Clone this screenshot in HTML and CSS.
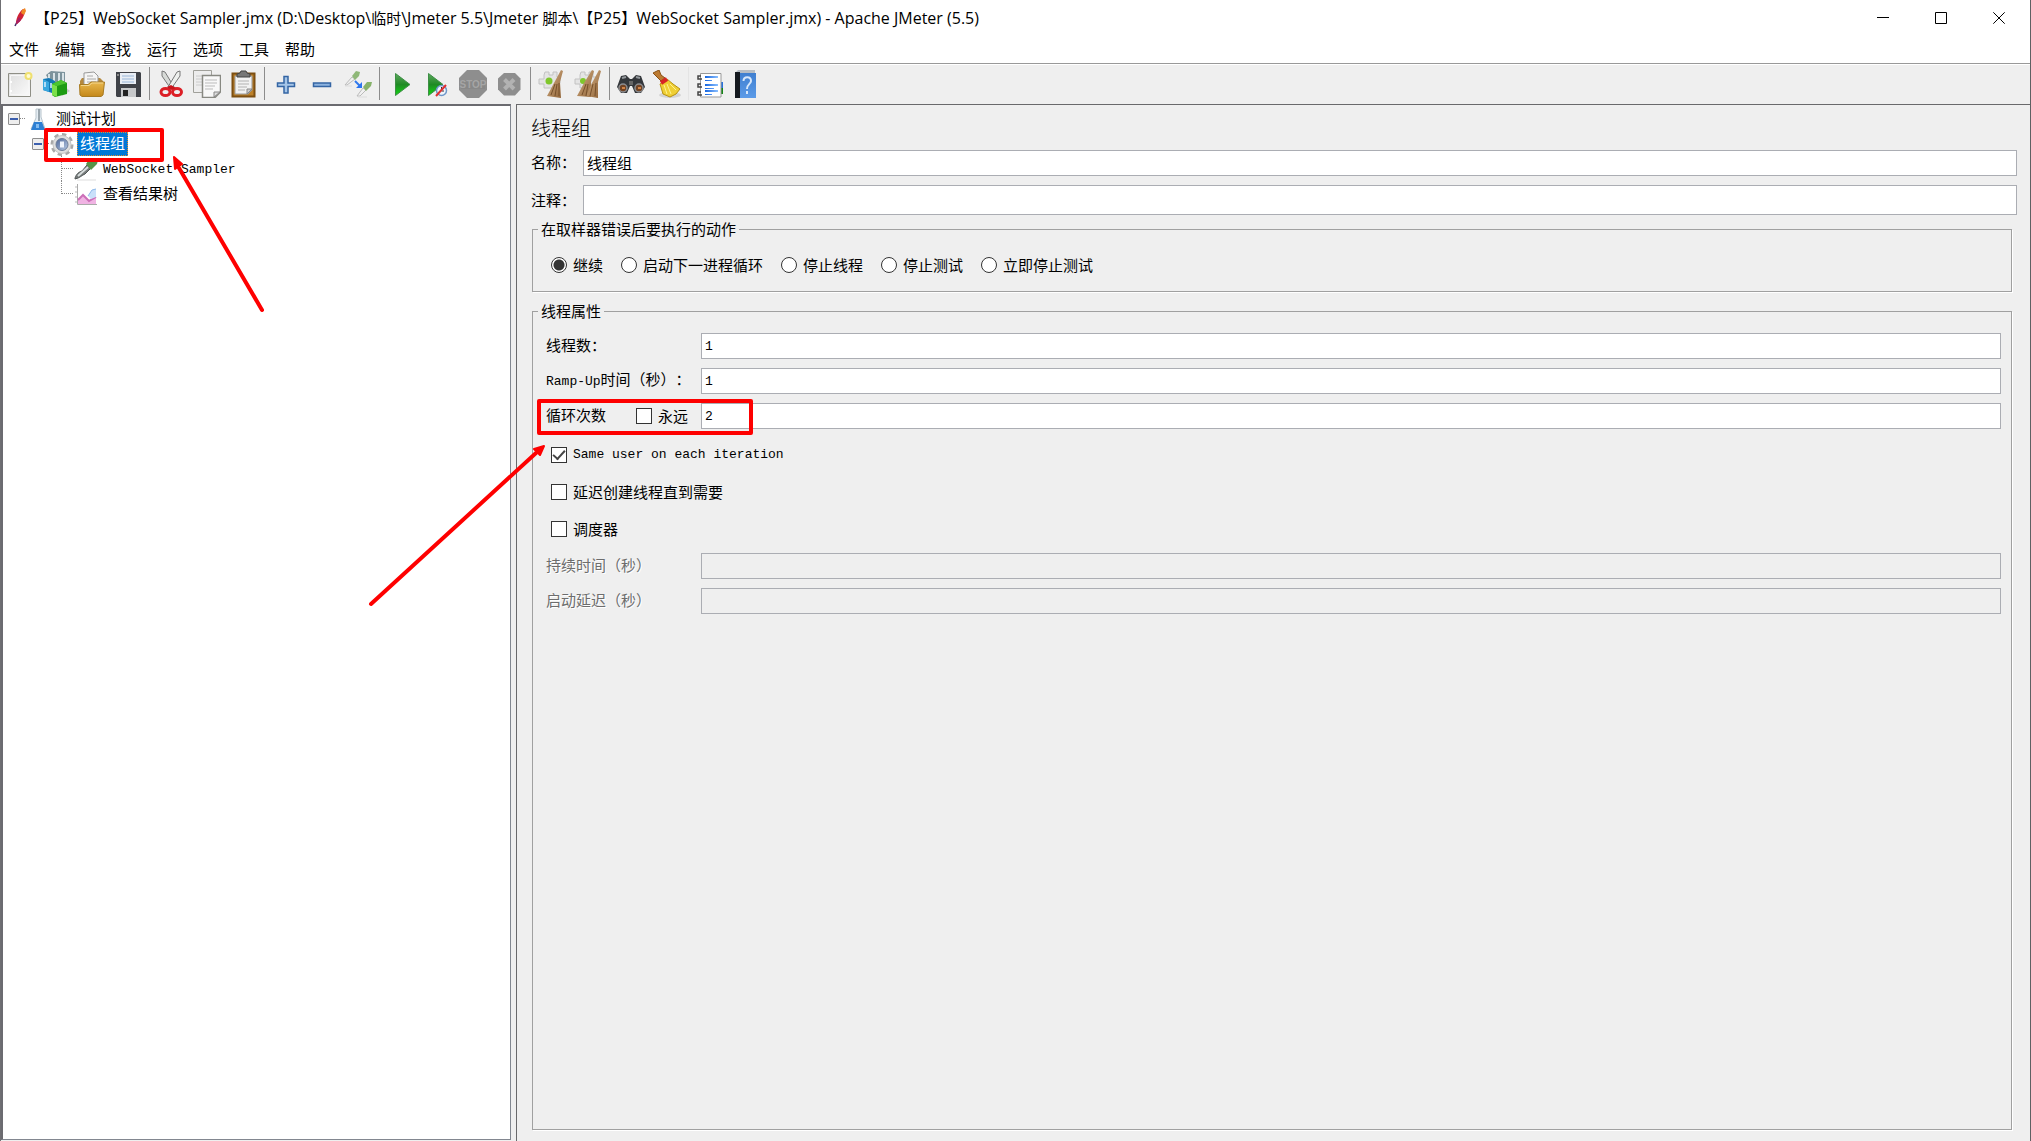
FILE: index.html
```html
<!DOCTYPE html>
<html lang="zh-CN">
<head>
<meta charset="utf-8">
<title>WebSocket Sampler.jmx - Apache JMeter (5.5)</title>
<link rel="stylesheet" href="styles.css">
</head>
<body>
<svg class="defs" aria-hidden="true">
  <defs>
    <linearGradient id="green" x1="0" y1="0" x2="0" y2="1"><stop offset="0" stop-color="#5fa860"/><stop offset=".5" stop-color="#1f8a24"/><stop offset="1" stop-color="#13d813"/></linearGradient>
    <linearGradient id="gold" x1="0" y1="0" x2="0" y2="1"><stop offset="0" stop-color="#e9b84e"/><stop offset="1" stop-color="#c4881a"/></linearGradient>
    <linearGradient id="paper" x1="0" y1="0" x2="1" y2="1"><stop offset="0" stop-color="#dedede"/><stop offset="1" stop-color="#fbfbfb"/></linearGradient>
    <linearGradient id="blue" x1="0" y1="0" x2="0" y2="1"><stop offset="0" stop-color="#3f7fd0"/><stop offset="1" stop-color="#5c9be8"/></linearGradient>
    <linearGradient id="line" x1="0" y1="0" x2="1" y2="0"><stop offset="0" stop-color="#1565e0"/><stop offset="1" stop-color="#8cc0ff"/></linearGradient>
    <linearGradient id="broom" x1="0" y1="0" x2="1" y2="1"><stop offset="0" stop-color="#d8b48a"/><stop offset="1" stop-color="#8d6034"/></linearGradient>
    <linearGradient id="steel" x1="0" y1="0" x2="1" y2="1"><stop offset="0" stop-color="#4d6595"/><stop offset="1" stop-color="#b9cbe6"/></linearGradient>
  </defs>
</svg>
<div class="window">
  <header class="titlebar">
    <svg class="feather" viewBox="0 0 14 22"><path d="M2 19 4 15" stroke="#4a2a6a" stroke-width="1.5"/><path d="M3 16C3 11 6 5 10 2l2 1C12 9 8 14 4 17Z" fill="#cf2234"/><path d="M9 3 12 1l1 3-2 4-3-2Z" fill="#ef8a25"/><path d="M3 15 6 10l2 3-4 4Z" fill="#a61f66"/></svg>
    <h1 class="title"><span class="cjk">【</span>P25<span class="cjk">】</span>WebSocket Sampler.jmx (D:\Desktop\<span class="cjk">临时</span>\Jmeter 5.5\Jmeter <span class="cjk">脚本</span>\<span class="cjk">【</span>P25<span class="cjk">】</span>WebSocket Sampler.jmx) - Apache JMeter (5.5)</h1>
    <div class="controls">
      <button class="control" aria-label="最小化"><svg viewBox="0 0 12 12"><path d="M0 5.500H12"/></svg></button>
      <button class="control" aria-label="最大化"><svg viewBox="0 0 12 12"><path d="M.5.5H11.500V11.500H.5Z"/></svg></button>
      <button class="control" aria-label="关闭"><svg viewBox="0 0 12 12"><path d="M.3.3 11.700 11.700M11.700.3.3 11.700"/></svg></button>
    </div>
  </header>
  <nav class="menubar">
    <button>文件</button><button>编辑</button><button>查找</button><button>运行</button><button>选项</button><button>工具</button><button>帮助</button>
  </nav>
  <div class="toolbar" role="toolbar">
    <button class="tool" aria-label="新建"><svg viewBox="0 0 28 28"><path d="M2.500 3.500H24.500V26.500H2.500Z" fill="url(#paper)" stroke="#8f8f86"/><path d="M4.500 5.500H22.500V24.500H4.500Z" fill="none" stroke="#f6f6f6"/><path d="M5 11v2M5 20v2" stroke="#fff" stroke-width="2"/><circle cx="22.500" cy="6" r="3" fill="#fffbd0" stroke="#efe070" stroke-width="2"/></svg></button>
    <button class="tool" aria-label="模板"><svg viewBox="0 0 28 28"><path d="M22 16 28 21 20 26Z" fill="#c9c9c9"/><path d="M4 5 9 1l14 1v13L10 16Z" fill="#7d939c"/><path d="M7 4v9M12 3v11M17 3v9M21 3v9" stroke="#d8e2e6" stroke-width="2"/><path d="M1 9 7 8l6 3v13L1 20Z" fill="#1478b5"/><path d="M1 9 7 12v10L1 20Z" fill="#39a7df"/><path d="M3 12v5M9 13v5" stroke="#d7f0ff" stroke-width="1.500"/><path d="M10 14 19 10l6 3v11l-12 3-3-2Z" fill="#1d9c12"/><path d="M10 14l5 2v11l-5-2Z" fill="#7be04a"/><path d="M10 14 19 10l6 3-10 3Z" fill="#4cc52f"/></svg></button>
    <button class="tool" aria-label="打开"><svg viewBox="0 0 28 28"><path d="M2 11 4 8H22l3 3v4H2Z" fill="#b5893e"/><path d="M6 15V3l10-1 4 4v9Z" fill="#f5f5f5" stroke="#999"/><path d="M9 6h6M9 9h9M9 12h9" stroke="#aaa"/><path d="M1.500 14.500H10L13 12H26.500L25 25 23 26.500H4L2 25Z" fill="url(#gold)" stroke="#a87b22"/><path d="M3 15.500H11L14 13H25" fill="none" stroke="#f3d68e"/></svg></button>
    <button class="tool" aria-label="保存"><svg viewBox="0 0 28 28"><path d="M2 2H26L27 3V27H3L2 26Z" fill="#3f4248"/><path d="M6 3H22V14H6Z" fill="#e9eef5"/><path d="M8 6h12M8 9h12M8 12h12" stroke="#99b6d8"/><path d="M7 18H22V27H7Z" fill="#c6c8ca"/><path d="M9 20H14V26H9Z" fill="#222"/><path d="M3 4H5V6H3Z" fill="#888"/></svg></button>
    <span class="separator"></span>
    <button class="tool" aria-label="剪切"><svg viewBox="0 0 28 28"><path d="M5 1 8 2 17 17 14 19 5 6Z" fill="#d7dad7" stroke="#777"/><path d="M23 1 20 2 11 17 14 19 23 6Z" fill="#eef0ee" stroke="#777"/><ellipse cx="8.500" cy="22" rx="4.500" ry="3.600" fill="none" stroke="#dc1f26" stroke-width="3"/><ellipse cx="20" cy="22" rx="4.500" ry="3.600" fill="none" stroke="#dc1f26" stroke-width="3"/><path d="M10 17 14 15 19 18 14 20Z" fill="#c8151c"/></svg></button>
    <button class="tool" aria-label="复制"><svg viewBox="0 0 28 28"><path d="M.5.5H18.500V22.500H.5Z" fill="#ededed" stroke="#a0a09a"/><path d="M3 6h8M3 9h6M3 12h6M3 15h6" stroke="#ccc"/><path d="M9.500 5.500H27.500V22L22 27.500H9.500Z" fill="#f8f8f8" stroke="#888982" stroke-width="1.500"/><path d="M12 10h12M12 13h12M12 16h10M12 19h8" stroke="#bbb"/><path d="M21 27V22H27Z" fill="#ddd" stroke="#888"/></svg></button>
    <button class="tool" aria-label="粘贴"><svg viewBox="0 0 28 28"><path d="M3.500 3.500H25.500V26.500H3.500Z" fill="#bd8129" stroke="#7c4f12" stroke-width="2"/><path d="M6 6H23V20L19 24H6Z" fill="#f2f2f2" stroke="#999"/><path d="M9 11h11M9 14h11M9 17h9M9 20h7" stroke="#b2b2b2"/><path d="M18 24V19H23Z" fill="#ccc" stroke="#888"/><path d="M8 7V4L11 3 12 1H17L18 3 21 4V7Z" fill="#777" stroke="#444"/></svg></button>
    <span class="separator"></span>
    <button class="tool" aria-label="展开"><svg viewBox="0 0 28 28"><path d="M12 6.500H16V13H22.500V16.500H16V23H12V16.500H5.500V13H12Z" fill="#a6c6e8" stroke="#3465a4" stroke-width="1.500"/></svg></button>
    <button class="tool" aria-label="折叠"><svg viewBox="0 0 28 28"><path d="M5.500 13H22.500V16.500H5.500Z" fill="#8db3df" stroke="#3465a4" stroke-width="1.500"/></svg></button>
    <button class="tool" aria-label="切换"><svg viewBox="0 0 28 28"><path d="M1 15 8 7l3 2L3 15Z" fill="#f1f1f1" stroke="#bbb"/><path d="M8 6 12 1l4 1-1 4-4 4Z" fill="#8fb878"/><path d="M13 26 19 18l3 2-6 6Z" fill="#f1f1f1" stroke="#bbb"/><path d="M19 17 23 12l5 0-1 4-5 5Z" fill="#86b269"/><path d="M11 11 16 16" stroke="#3079ed" stroke-width="2"/><path d="M18 12V18H12Z" fill="#2a74ee"/><path d="M1 16h7M14 27h9" stroke="#ddd"/></svg></button>
    <span class="separator"></span>
    <button class="tool" aria-label="启动"><svg viewBox="0 0 28 28"><path d="M8.500 3.500 23 14.500 8.500 25.500Z" fill="url(#green)" stroke="#3d8f45"/></svg></button>
    <button class="tool" aria-label="不停顿启动"><svg viewBox="0 0 28 28"><path d="M5.500 3.500 20 14.500 5.500 25.500Z" fill="url(#green)" stroke="#3d8f45"/><circle cx="18.500" cy="20.500" r="5" fill="#eef4fb" stroke="#6f97c8" stroke-width="1.500"/><path d="M18.500 17V21H21" fill="none" stroke="#333"/><path d="M13 26 23 15" stroke="#e03030" stroke-width="2"/></svg></button>
    <button class="tool" aria-label="停止" disabled><svg viewBox="0 0 28 28"><path d="M8 0H20L28 8V20L20 28H8L0 20V8Z" fill="#8e8e8e"/><path d="M2 10H26V19H2Z" fill="#888"/><text x="14" y="18" class="stop-text">STOP</text></svg></button>
    <button class="tool" aria-label="关闭线程" disabled><svg viewBox="0 0 28 28"><path d="M9 3H20L25.500 8.500V19.500L20 25.500H9L3 19.500V8.500Z" fill="#8e8e8e"/><path d="M9.500 9.500 19 19M19 9.500 9.500 19" stroke="#b2b2b2" stroke-width="4"/></svg></button>
    <span class="separator"></span>
    <button class="tool" aria-label="清除"><svg viewBox="0 0 28 28"><path d="M7 2h4v3h4V2h4v5h3v6h-4v5H6v-4H1V9h5V5Z" fill="#e4e4e4" stroke="#c2c2c2"/><circle cx="11" cy="11" r="3.500" fill="#7fc72c"/><path d="M23 0 25 1 22 12 23 28 9 26 16 13Z" fill="url(#broom)"/><path d="M17 14 13 25M19 14 17 26M21 13 21 26" stroke="#76502b"/></svg></button>
    <button class="tool" aria-label="清除全部"><svg viewBox="0 0 28 28"><path d="M7 2h4v3h4V2h4v5h3v6h-4v5H6v-4H1V9h5V5Z" fill="#e4e4e4" stroke="#c2c2c2"/><circle cx="9" cy="11" r="3" fill="#7fc72c"/><path d="M18 0 20 1 17 12 17 27 3 26 10 13Z" fill="url(#broom)"/><path d="M25 0 27 1 24 12 24 28 12 26 18 13Z" fill="url(#broom)"/><path d="M12 14 8 25M14 14 12 26M19 14 16 26M22 13 21 26" stroke="#76502b"/></svg></button>
    <span class="separator"></span>
    <button class="tool" aria-label="搜索"><svg viewBox="0 0 28 28"><path d="M4 6 9 5 13 9H15L19 5 24 6 28 17 24 23H18L15 16H13L10 23H4L0 17Z" fill="#34373b"/><path d="M5 8 9 7M19 7 23 8" stroke="#93989c" stroke-width="2"/><circle cx="6" cy="18" r="4" fill="#704324" stroke="#8b8d91" stroke-width="1.500"/><circle cx="22" cy="18" r="4" fill="#704324" stroke="#8b8d91" stroke-width="1.500"/><path d="M5 18h3M21 18h3" stroke="#d18346" stroke-width="2"/><path d="M12 11h4v4h-4Z" fill="#666"/></svg></button>
    <button class="tool" aria-label="清空搜索"><svg viewBox="0 0 28 28"><ellipse cx="17" cy="25" rx="11" ry="3" fill="#d3d3d3"/><path d="M0 3 6 0 8 5 12 8 8 11 4 7Z" fill="#bc7b32" stroke="#895013"/><path d="M14 9 20 14 27 19 23 24 17 27 10 24 7 14Z" fill="#efcf34" stroke="#b79212"/><path d="M11 15 14 24M14 14 18 24M17 14 23 20" stroke="#fff28f"/><path d="M8 13 14 9" stroke="#d82424" stroke-width="4"/></svg></button>
    <span class="separator faint"></span>
    <button class="tool" aria-label="函数助手"><svg viewBox="0 0 28 28"><path d="M25 12h2v6h-2Z" fill="#2972dd"/><path d="M25 18h2v6h-2Z" fill="#158515"/><path d="M4.500 3.500H25V27H4.500Z" fill="#fff" stroke="#999"/><path d="M5 6H2v3h4M5 14H2v3h4M5 22H2v3h4" fill="none" stroke="#444" stroke-width="1.500"/><path d="M9 6h13v2H9ZM9 10h7v1H9ZM9 14h13v2H9ZM9 18h9v1H9ZM9 20h13v2H9ZM9 24h7v1H9Z" fill="url(#line)"/></svg></button>
    <button class="tool" aria-label="帮助"><svg viewBox="0 0 28 28"><path d="M3 3 6 0H23V5H3Z" fill="#b6bdc4"/><path d="M3 3H24V28H3Z" fill="url(#blue)"/><path d="M3 2H8V28H3Z" fill="#15191f"/><path d="M11.500 11C11.500 6 19 6 19 11 19 14 15 14 15 19" fill="none" stroke="#d6e7fb" stroke-width="2"/><path d="M14 21h2v3h-2Z" fill="#d6e7fb"/></svg></button>
  </div>

  <main class="workspace">
    <section class="tree" aria-label="测试计划树">
      <div class="node root">
        <button class="expander" aria-label="折叠"></button><i class="dots"></i>
        <svg class="node-icon" viewBox="0 0 24 24"><path d="M10 2H15V10L19 22H5L10 11Z" fill="#e6eef4" stroke="#b8c4cc"/><path d="M8 15H16L19 23H5Z" fill="#2d7fd3"/><path d="M13 2V14" stroke="#9aa6ae" stroke-width="2"/><path d="M10 17h3v4h-3Z" fill="#82bbf0"/></svg>
        <span class="node-label">测试计划</span>
      </div>
      <div class="node group">
        <button class="expander" aria-label="折叠"></button><i class="dots"></i>
        <svg class="node-icon" viewBox="0 0 24 24"><circle cx="12" cy="12.500" r="10" fill="none" stroke="#a8a8a8" stroke-width="3" stroke-dasharray="4.300 3.500"/><circle cx="12" cy="12.500" r="9" fill="#dedede" stroke="#c4c4c4"/><circle cx="12" cy="12.500" r="6" fill="url(#steel)" stroke="#6d7d98"/><path d="M10 9.500H14V15.500H10Z" fill="#eef3fb"/></svg>
        <span class="node-label selected">线程组</span>
      </div>
      <div class="node leaf">
        <i class="dots"></i>
        <svg class="node-icon" viewBox="0 0 24 24"><path d="M3 23H22" stroke="#ddd"/><path d="M1 22C1 19 4 15 8 14L13 8 17 11 11 17C8 18 6 21 1 22Z" fill="#777b7b" stroke="#4f5555"/><path d="M4 19 14 10" stroke="#d7dddd" stroke-width="2"/><path d="M12 7 14 4 17 5 20 2 24 3 23 7 19 11 17 13Z" fill="#579348"/></svg>
        <span class="node-label latin">WebSocket Sampler</span>
      </div>
      <div class="node leaf last">
        <i class="dots"></i>
        <svg class="node-icon" viewBox="0 0 24 24"><path d="M3.500 2V22.500H23" fill="none" stroke="#aaa"/><path d="M1 5h2M1 10h2M1 15h2M1 20h2" stroke="#bbb"/><path d="M4 18 10 13 15 18 22 12V22H4Z" fill="#f0b3e3"/><path d="M4 18 9 13 15 19 22 15" fill="none" stroke="#cc6fb8" stroke-width="2"/><path d="M14 14 18 8 22 7V15L17 17Z" fill="#c9e0fa"/><path d="M14 14 18 8 22 7" fill="none" stroke="#8db9ea"/></svg>
        <span class="node-label">查看结果树</span>
      </div>
    </section>

    <section class="editor">
      <h2 class="heading">线程组</h2>
      <div class="field name"><label for="name">名称：</label><input id="name" type="text" value="线程组"></div>
      <div class="field comment"><label for="comment">注释：</label><input id="comment" type="text"></div>

      <fieldset class="box">
        <legend>在取样器错误后要执行的动作</legend>
        <div class="radios">
          <label><input type="radio" name="action" checked>继续</label>
          <label><input type="radio" name="action">启动下一进程循环</label>
          <label><input type="radio" name="action">停止线程</label>
          <label><input type="radio" name="action">停止测试</label>
          <label><input type="radio" name="action">立即停止测试</label>
        </div>
      </fieldset>

      <fieldset class="box properties">
        <legend>线程属性</legend>
        <div class="rows">
          <div class="row"><label for="threads">线程数：</label><input id="threads" class="latin" type="text" value="1"></div>
          <div class="row"><label for="ramp"><span class="latin">Ramp-Up</span>时间（秒）：</label><input id="ramp" class="latin" type="text" value="1"></div>
          <div class="row"><label for="loops">循环次数</label><label class="forever"><input type="checkbox">永远</label><input id="loops" class="latin" type="text" value="2"></div>
        </div>
        <div class="checks">
          <label class="latin"><input type="checkbox" checked>Same user on each iteration</label>
          <label><input type="checkbox">延迟创建线程直到需要</label>
          <label><input type="checkbox">调度器</label>
        </div>
        <div class="rows">
          <div class="row off"><label for="duration">持续时间（秒）</label><input id="duration" type="text" disabled></div>
          <div class="row off"><label for="delay">启动延迟（秒）</label><input id="delay" type="text" disabled></div>
        </div>
      </fieldset>
    </section>
  </main>

  <svg class="annotations" aria-hidden="true">
    <rect x="46" y="130" width="116" height="30"/>
    <rect x="539" y="401" width="212" height="32"/>
    <path d="M262 310 179 168M371 604 536 453"/>
    <path class="head" d="M174 157 182 164 175 169ZM544 446 540 455 534 449Z"/>
  </svg>
</div>
</body>
</html>
```
FILE: styles.css
```css
* { box-sizing: border-box; }

body {
  margin: 0;
  background: #efefef;
  color: #000;
  font: 15px/20px "Noto Sans CJK SC", sans-serif;
  text-spacing-trim: space-all;
}

button {
  margin: 0;
  padding: 0;
  border: 0;
  background: none;
  color: inherit;
  font: inherit;
}

.defs { position: absolute; width: 0; height: 0; }

.window {
  position: relative;
  display: flex;
  flex-direction: column;
  min-height: 100vh;
  border-left: 1px solid #6f6f73;
  border-right: 1px solid #5d6163;
}

/* title bar */
.titlebar {
  display: flex;
  align-items: center;
  height: 36px;
  padding-left: 12px;
  background: #fff;
}

.feather { width: 14px; height: 22px; margin-right: 8px; }

.title {
  flex: 1;
  margin: 0;
  font: 16px/20px "Open Sans", "Noto Sans CJK SC", sans-serif;
  white-space: nowrap;
}
.title .cjk { font-size: 15px; }

.controls { display: flex; padding-right: 2px; }
.control { display: grid; place-items: center; width: 58px; height: 36px; }
.control svg { width: 12px; height: 12px; fill: none; stroke: #000; }

/* menus */
.menubar {
  display: flex;
  gap: 16px;
  height: 28px;
  padding: 0 8px 2px;
  border-bottom: 1px solid #999;
  background: #fff;
}

/* toolbar */
.toolbar {
  display: flex;
  align-items: center;
  height: 40px;
  padding: 0 0 2px 1px;
  border-top: 1px solid #fff;
}

.tool { display: grid; place-items: center; width: 36px; height: 36px; }
.tool svg { width: 28px; height: 28px; }

.stop-text {
  font: bold 10px "Liberation Sans", sans-serif;
  text-anchor: middle;
  fill: #a5a5a5;
}

.separator { width: 7px; height: 33px; padding-left: 3px; }
.separator::before { content: ""; display: block; width: 1px; height: 100%; background: #8c8c8c; }
.separator.faint::before { background: #e4e4e4; }

/* split pane */
.workspace {
  flex: 1;
  display: grid;
  grid-template-columns: 510px 1fr;
  gap: 5px;
}

.tree {
  margin-bottom: 1px;
  padding-left: 5px;
  border: 1px solid #828790;
  border-top: 2px solid #6b6b70;
  border-left: 2px solid #6b6b70;
  background: #fff;
}

.node { display: flex; align-items: center; height: 25px; }
.node.group { padding-left: 24px; }

.node .dots { width: 5px; border-top: 1px dotted #888; }
.node.leaf .dots { width: 12px; }
.node.leaf {
  padding-left: 53px;
  background: repeating-linear-gradient(#888 0 1px, #fff 1px 2px) 53px 0 / 1px 100% no-repeat;
}
.node.leaf.last { background-size: 1px 50%; }

.expander {
  width: 12px;
  height: 12px;
  border: 1px solid #8e8e8e;
  border-radius: 1px;
  background: linear-gradient(#3c5fae, #3c5fae) center / 8px 2px no-repeat, #eee;
}

.node-icon { flex: none; width: 24px; height: 24px; margin-left: 1px; }
.root .node-icon { margin-right: 4px; }
.node-label { padding: 0 2px 2px; line-height: 22px; white-space: nowrap; }
.group .node-label { margin-left: 3px; padding: 0 3px 2px; }
.leaf .node-label { padding-left: 5px; }
.node-label.latin { padding: 3px 2px 0 5px; }

.selected {
  outline: 1px dotted #e88a28;
  outline-offset: -1px;
  background: #0078d7;
  color: #fff;
}

.latin { font-family: "Liberation Mono", monospace; font-size: 13px; }

/* editor pane */
.editor {
  display: flex;
  flex-direction: column;
  padding: 9px 13px 11px 14px;
  border-top: 1px solid #69696b;
  border-left: 1px solid #69696b;
}

.heading { margin: 0 0 8px; font-size: 20px; font-weight: 300; line-height: 28px; }

input[type="text"] {
  flex: 1;
  min-width: 0;
  height: 26px;
  padding: 0 3px 2px;
  border: 1px solid #abadb3;
  border-radius: 0;
  background: #fff;
  color: #000;
  font-size: 15px;
  font-family: inherit;
}
input[type="text"]:disabled { background: #efefef; }
input[type="text"].latin { padding-bottom: 0; font-family: "Liberation Mono", monospace; font-size: 13px; }

.field { display: flex; align-items: center; }
.field label { width: 52px; }
.name { margin-bottom: 9px; }
.name label { padding-bottom: 2px; }
.comment { margin-bottom: 4px; }
.field.comment input { height: 30px; }

.box {
  min-width: 0;
  margin: 0 5px 9px 1px;
  padding: 0;
  border: 1px solid #a0a0a0;
  box-shadow: 1px 1px #fff;
}
.box legend { height: 20px; margin-left: 5px; padding: 0 3px; }

.radios { display: flex; gap: 18px; padding: 16px 18px; }
.radios label, .checks label, .forever { display: flex; align-items: center; gap: 6px; }

input[type="radio"], input[type="checkbox"] {
  appearance: none;
  flex: none;
  width: 16px;
  height: 16px;
  margin: 0;
  border: 1px solid #333;
  background: #fff;
}
input[type="radio"] { border-radius: 50%; }
input[type="radio"]:checked { background: radial-gradient(circle, #333 0 5px, #fff 6px); }
input[type="checkbox"]:checked { display: grid; place-items: center; }
input[type="checkbox"]:checked::before {
  content: "";
  width: 10px;
  height: 5px;
  margin-bottom: 3px;
  border: solid #444;
  border-width: 0 0 2px 2px;
  transform: rotate(-48deg);
}

.properties { flex: 1; margin-bottom: 0; }
.rows { display: grid; gap: 9px; padding: 12px 10px 0 13px; }
.row { display: flex; align-items: center; }
.row > label:first-child { width: 155px; padding-bottom: 2px; white-space: nowrap; }
.row:has(.forever) > label:first-child { width: 90px; }
.row > .forever { width: 65px; }
.off label { color: #6d6d6d; text-shadow: 1px 1px #fff; }

.checks { display: grid; gap: 17px; padding: 16px 18px 0; }
.checks label { height: 20px; }
.checks + .rows { padding-top: 14px; }

/* red call-outs drawn over the window */
.annotations {
  position: absolute;
  top: 0;
  left: -1px;
  width: 100%;
  height: 100%;
  fill: none;
  stroke: #fe0000;
  stroke-width: 4;
  stroke-linecap: round;
  stroke-linejoin: round;
  pointer-events: none;
}
.annotations .head { fill: #fe0000; stroke-width: 2; }
```
